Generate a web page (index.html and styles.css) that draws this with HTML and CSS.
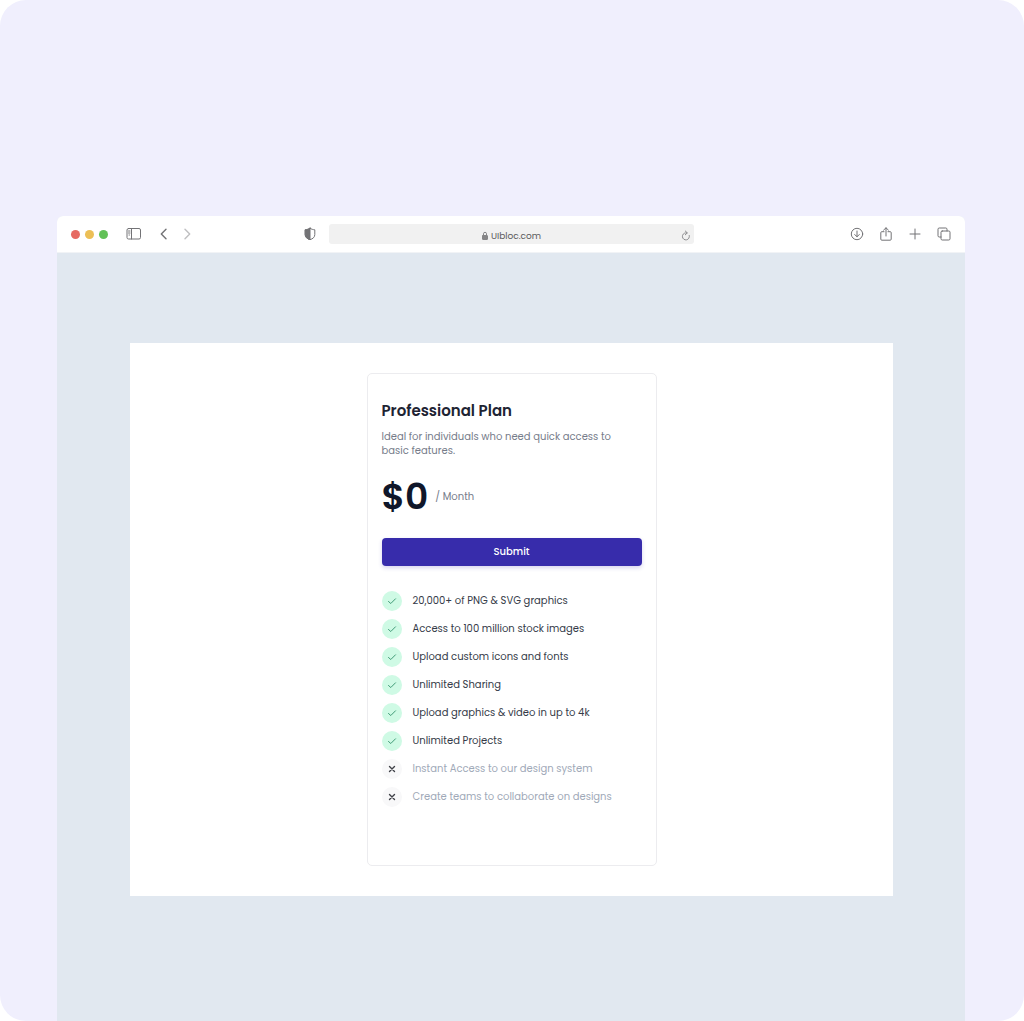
FILE: index.html
```html
<!DOCTYPE html>
<html lang="en">
<head>
    <meta charset="UTF-8">
    <meta name="viewport" content="width=device-width, initial-scale=1.0">
    <title>Professional Plan</title>
    <link rel="stylesheet" href="styles.css">
</head>
<body>
    <div class="stage">
        <div class="browser">
            <header class="toolbar">
                <div class="toolbar-left">
                    <div class="dots">
                        <span class="dot red"></span>
                        <span class="dot yellow"></span>
                        <span class="dot green"></span>
                    </div>
                    <button class="icon-btn sidebar-btn" type="button" aria-label="Sidebar">
                        <svg width="16" height="14" viewBox="0 0 16 14"><rect x="1" y="1.500" width="13.500" height="10.500" rx="1.500"/><path d="M5.500 1.500v10.500M2.500 4h1.500M2.500 6h1.500M3 8h.5"/></svg>
                    </button>
                    <button class="icon-btn" type="button" aria-label="Back">
                        <svg class="bold" width="10" height="14" viewBox="0 0 10 14"><path d="M7 2.200L2.300 7L7 11.800"/></svg>
                    </button>
                    <button class="icon-btn faded" type="button" aria-label="Forward">
                        <svg class="bold" width="10" height="14" viewBox="0 0 10 14"><path d="M3 2.200L7.700 7L3 11.800"/></svg>
                    </button>
                    <button class="icon-btn shield-btn" type="button" aria-label="Privacy report">
                        <svg width="12" height="14" viewBox="0 0 12 14"><path d="M6 1.300C7.500 2.300 9 2.600 10.800 2.800V7.500C10.800 10.300 8.800 11.800 6 12.700C3.200 11.800 1.200 10.300 1.200 7.500V2.800C3 2.600 4.500 2.300 6 1.300Z"/><path class="solid" d="M6 1.300V12.700C3.200 11.800 1.200 10.300 1.200 7.500V2.800C3 2.600 4.500 2.300 6 1.300Z"/></svg>
                    </button>
                </div>
                <div class="address">
                    <svg class="lock" width="8" height="10" viewBox="0 0 8 10"><rect class="solid" x="1.500" y="4.500" width="5" height="4" rx=".5"/><path d="M2.500 4.500V2.800a1.500 1.500 0 0 1 3 0V4.500"/></svg>
                    <span>UIbloc.com</span>
                    <button class="icon-btn reload-btn" type="button" aria-label="Reload">
                        <svg width="10" height="12" viewBox="0 0 10 12"><path d="M8.300 5.500a3.500 3.500 0 1 1-3.500-2.600h1.200M4.300 1l2 1.900-2 1.900"/></svg>
                    </button>
                </div>
                <div class="toolbar-right">
                    <button class="icon-btn" type="button" aria-label="Downloads">
                        <svg width="14" height="14" viewBox="0 0 14 14"><circle cx="7" cy="7" r="5.700"/><path d="M7 4v5.700M4.700 7.500L7 9.800l2.300-2.300"/></svg>
                    </button>
                    <button class="icon-btn" type="button" aria-label="Share">
                        <svg width="14" height="14" viewBox="0 0 14 14"><path d="M5 4.700H2.800a1 1 0 0 0-1 1v6.500a1 1 0 0 0 1 1h8.400a1 1 0 0 0 1-1V5.700a1 1 0 0 0-1-1H9M7 9V.8M4.600 3.100L7 .8l2.400 2.300"/></svg>
                    </button>
                    <button class="icon-btn" type="button" aria-label="New tab">
                        <svg width="14" height="14" viewBox="0 0 14 14"><path d="M7 2v10M2 7h10"/></svg>
                    </button>
                    <button class="icon-btn" type="button" aria-label="Tab overview">
                        <svg width="14" height="14" viewBox="0 0 14 14"><rect x="4" y="4" width="9" height="9" rx="1.200"/><path d="M4 10H2.200A1.200 1.200 0 0 1 1 8.800V2.200A1.200 1.200 0 0 1 2.200 1h6.600A1.200 1.200 0 0 1 10 2.200V4"/></svg>
                    </button>
                </div>
            </header>

            <main class="page">
                <section class="panel">
                    <article class="card">
                        <h1>Professional Plan</h1>
                        <p class="desc">Ideal for individuals who need quick access to basic features.</p>
                        <p class="price"><span class="amount">$0</span> <span class="period">/ Month</span></p>
                        <button class="btn" type="button">Submit</button>
                        <ul class="features">
                            <li><span class="mark"><svg width="10" height="10" viewBox="0 0 10 10"><path d="M1.500 5.500L3.800 7.500L8.500 2.800"/></svg></span>20,000+ of PNG &amp; SVG graphics</li>
                            <li><span class="mark"><svg width="10" height="10" viewBox="0 0 10 10"><path d="M1.500 5.500L3.800 7.500L8.500 2.800"/></svg></span>Access to 100 million stock images</li>
                            <li><span class="mark"><svg width="10" height="10" viewBox="0 0 10 10"><path d="M1.500 5.500L3.800 7.500L8.500 2.800"/></svg></span>Upload custom icons and fonts</li>
                            <li><span class="mark"><svg width="10" height="10" viewBox="0 0 10 10"><path d="M1.500 5.500L3.800 7.500L8.500 2.800"/></svg></span>Unlimited Sharing</li>
                            <li><span class="mark"><svg width="10" height="10" viewBox="0 0 10 10"><path d="M1.500 5.500L3.800 7.500L8.500 2.800"/></svg></span>Upload graphics &amp; video in up to 4k</li>
                            <li><span class="mark"><svg width="10" height="10" viewBox="0 0 10 10"><path d="M1.500 5.500L3.800 7.500L8.500 2.800"/></svg></span>Unlimited Projects</li>
                            <li class="off"><span class="mark"><svg width="10" height="10" viewBox="0 0 10 10"><path d="M2.500 2.500l5 5M7.500 2.500l-5 5"/></svg></span>Instant Access to our design system</li>
                            <li class="off"><span class="mark"><svg width="10" height="10" viewBox="0 0 10 10"><path d="M2.500 2.500l5 5M7.500 2.500l-5 5"/></svg></span>Create teams to collaborate on designs</li>
                        </ul>
                    </article>
                </section>
            </main>
        </div>
    </div>
</body>
</html>
```
FILE: styles.css
```css
* {
    box-sizing: border-box;
}

body {
    margin: 0;
    font-family: Poppins, Inter, sans-serif;
    font-size: 10px;
    background-color: #fff;
}

.stage {
    display: flex;
    min-height: 100vh;
    padding: 216px 59px 0 57px;
    background-color: #f0effd;
    border-radius: 26px;
    overflow: hidden;
}

.browser {
    flex: 1;
    display: flex;
    flex-direction: column;
    border-radius: 6px 6px 0 0;
    overflow: hidden;
    background-color: #e1e8f0;
}

/* Toolbar */
.toolbar {
    display: grid;
    grid-template-columns: 1fr minmax(0, 365px) 1fr;
    align-items: center;
    height: 37px;
    padding: 0 14px;
    background-color: #fff;
    border-bottom: 1px solid #f1f3f6;
}

.toolbar-left,
.toolbar-right,
.dots {
    display: flex;
    align-items: center;
}

.toolbar-left {
    gap: 13px;
}

.toolbar-right {
    gap: 15px;
    justify-content: flex-end;
}

.dots {
    gap: 5px;
    margin-right: 5px;
}

.dot {
    width: 9px;
    height: 9px;
    border-radius: 50%;
}

.red {
    background-color: #e66a62;
}

.yellow {
    background-color: #ecbf56;
}

.green {
    background-color: #62c158;
}

.icon-btn {
    display: flex;
    padding: 0;
    border: none;
    background: none;
    color: #737376;
    cursor: pointer;
}

.sidebar-btn {
    margin-right: 4px;
}

.shield-btn {
    margin-left: auto;
    margin-right: 13px;
}

.faded {
    color: #bfbfc1;
}

svg {
    fill: none;
    stroke: currentColor;
    stroke-width: 1;
    stroke-linecap: round;
    stroke-linejoin: round;
}

.bold {
    stroke-width: 1.4;
}

.solid {
    fill: currentColor;
}

.address {
    position: relative;
    display: flex;
    align-items: center;
    justify-content: center;
    gap: 2px;
    height: 20px;
    padding-top: 4px;
    border-radius: 3px;
    background-color: #f1f1f1;
    color: #5c5c5e;
    font-size: 9px;
}

.lock {
    color: #858587;
}

.reload-btn {
    position: absolute;
    top: 6px;
    right: 3px;
    color: #8c8c8f;
}

/* Page */
.page {
    padding: 90px 72px 124px 73px;
}

.panel {
    display: flex;
    justify-content: center;
    padding: 30px;
    background-color: #fff;
}

.card {
    width: 290px;
    padding: 25px 14px 58px;
    border: 1px solid #ececef;
    border-radius: 5px;
}

h1 {
    margin: 0;
    font-size: 15px;
    line-height: 24px;
    font-weight: 600;
    color: #1e2433;
}

.desc {
    max-width: 240px;
    margin: 7px 0 0;
    line-height: 14px;
    color: #767c8a;
}

.price {
    display: flex;
    align-items: center;
    gap: 7px;
    margin: 19px 0 21px;
    line-height: 40px;
}

.amount {
    font-size: 36px;
    font-weight: 600;
    color: #10172a;
}

.period {
    color: #767c8a;
}

.btn {
    width: 100%;
    height: 28px;
    padding: 0;
    border: none;
    border-radius: 4px;
    background-color: #372cab;
    box-shadow: 0 2px 4px rgba(55, 44, 171, 0.2);
    color: #fff;
    font: inherit;
    font-weight: 500;
    cursor: pointer;
}

.btn:hover {
    background-color: #2f2595;
}

.features {
    display: flex;
    flex-direction: column;
    gap: 8px;
    margin: 25px 0 0;
    padding: 0;
    list-style: none;
    color: #353b48;
}

.features li {
    display: flex;
    align-items: center;
    gap: 11px;
    line-height: 20px;
}

.mark {
    display: flex;
    align-items: center;
    justify-content: center;
    width: 20px;
    height: 20px;
    border-radius: 50%;
    background-color: #cffae5;
    color: #3f9a76;
}

.features .off {
    color: #a0a9b8;
}

.off .mark {
    background-color: #f8f8f9;
    color: #3f4147;
}

.off svg {
    stroke-width: 1.4;
}
```
